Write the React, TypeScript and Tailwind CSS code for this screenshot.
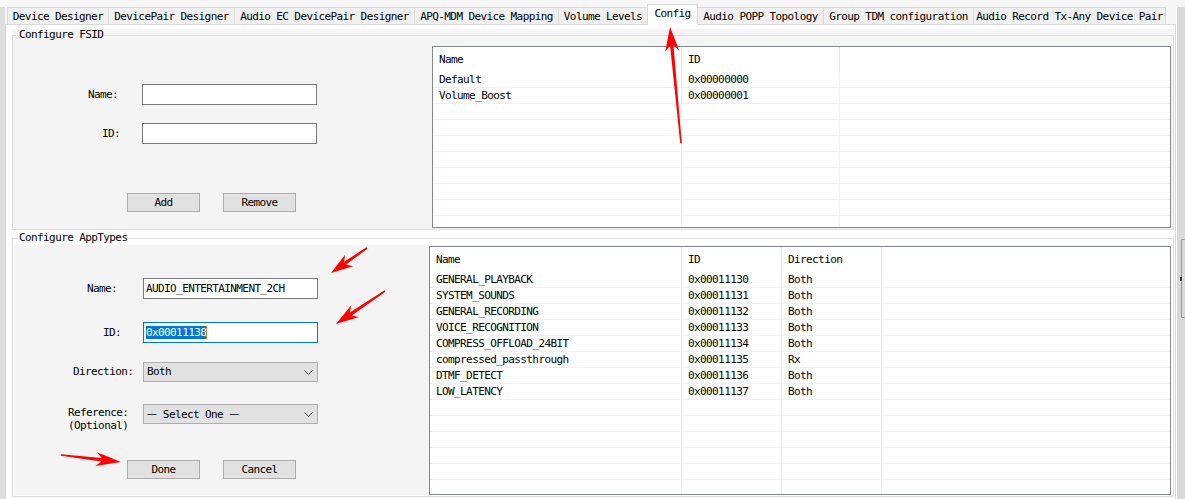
import React from "react";

type Col = { label: string; w: string };

function arrowPts(x1: number, y1: number, x2: number, y2: number, hl: number, hw: number, w0: number, w1: number) {
  const dx = x2 - x1, dy = y2 - y1, L = Math.hypot(dx, dy);
  const ux = dx / L, uy = dy / L, nx = -uy, ny = ux;
  const bx = x2 - ux * hl, by = y2 - uy * hl;
  const kx = x2 - ux * hl * 0.78, ky = y2 - uy * hl * 0.78;
  const p = [
    [x1 + (nx * w0) / 2, y1 + (ny * w0) / 2],
    [kx + (nx * w1) / 2, ky + (ny * w1) / 2],
    [bx + nx * hw, by + ny * hw],
    [x2, y2],
    [bx - nx * hw, by - ny * hw],
    [kx - (nx * w1) / 2, ky - (ny * w1) / 2],
    [x1 - (nx * w0) / 2, y1 - (ny * w0) / 2],
  ];
  return p.map((q) => q.map((v) => v.toFixed(1)).join(",")).join(" ");
}

function ListView({ cols, rows, total, className }: { cols: Col[]; rows: string[][]; total: number; className: string }) {
  const all = Array.from({ length: total }, (_, i) => rows[i] || []);
  return (
    <div className={`border border-[#828790] bg-white overflow-hidden flex flex-col ${className}`}>
      <div className="flex h-[25px] shrink-0">
        {cols.map((c) => (
          <div key={c.label} className={`${c.w} shrink-0 h-full border-r border-[#e5e5e5] flex items-center pl-[6px] pt-px`}>
            {c.label}
          </div>
        ))}
        <div className="flex-1" />
      </div>
      {all.map((r, i) => (
        <div key={i} className="flex h-[16px] shrink-0 border-b border-[#f0f0f0]">
          {cols.map((c, j) => (
            <div key={j} className={`${c.w} shrink-0 h-full border-r border-[#f0f0f0] flex items-center pl-[6px] pt-px whitespace-nowrap overflow-hidden`}>
              {r[j] || ""}
            </div>
          ))}
          <div className="flex-1" />
        </div>
      ))}
    </div>
  );
}

function Btn({ children, className = "" }: { children: React.ReactNode; className?: string }) {
  return (
    <div className={`h-[19px] w-[73px] shrink-0 bg-[#e1e1e1] border border-[#adadad] flex items-center justify-center ${className}`}>
      {children}
    </div>
  );
}

function Chevron() {
  return (
    <svg className="ml-auto mr-[4px]" width="9" height="5" viewBox="0 0 9 5">
      <polyline points="0.5,0.5 4.5,4.5 8.5,0.5" fill="none" stroke="#444" strokeWidth="1" />
    </svg>
  );
}

const tabs: { label: string; cls: string; sel?: boolean }[] = [
  { label: "Device Designer", cls: "w-[101px] border-l" },
  { label: "DevicePair Designer", cls: "w-[126px] border-l" },
  { label: "Audio EC DevicePair Designer", cls: "w-[180px] border-l" },
  { label: "APQ-MDM Device Mapping", cls: "w-[144px] border-l" },
  { label: "Volume Levels", cls: "w-[89px] border-l" },
  { label: "Config", cls: "w-[51px]", sel: true },
  { label: "Audio POPP Topology", cls: "w-[125px]" },
  { label: "Group TDM configuration", cls: "w-[150px] border-l" },
  { label: "Audio Record Tx-Any Device Pair", cls: "w-[193px] border-l border-r" },
];

export default function App() {
  const dash = <span className="font-['Noto_Sans_CJK_SC',sans-serif] tracking-normal">—</span>;
  return (
    <div className="relative w-[1185px] h-[499px] overflow-hidden bg-[#f7f7f7] flex flex-col text-black text-[11px] leading-[12px] tracking-[-0.6px] font-['DejaVu_Sans_Mono',monospace]">
      <div className="h-[7px] shrink-0" />
      <div className="flex h-[492px]">
        <div className="w-[5px] shrink-0 bg-[#dedede]" />
        <div className="w-[1171px] shrink-0 flex flex-col">
          {/* tab strip */}
          <div className="h-[17px] shrink-0 flex items-end pl-[2px]">
            {tabs.map((t) =>
              t.sel ? (
                <div
                  key={t.label}
                  className={`${t.cls} shrink-0 h-[21px] -mb-px relative z-10 bg-white border border-b-0 border-[#d9d9d9] flex items-center justify-center pb-[2px]`}
                >
                  {t.label}
                </div>
              ) : (
                <div
                  key={t.label}
                  className={`${t.cls} shrink-0 h-[17px] bg-[#f0f0f0] border-t border-[#d9d9d9] flex items-center justify-center pt-px whitespace-nowrap overflow-hidden`}
                >
                  {t.label}
                </div>
              )
            )}
          </div>
          {/* tab page */}
          <div className="flex-1 bg-white border-t border-l border-r border-[#d9d9d9] flex flex-col">
            {/* Configure FSID */}
            <div className="ml-[6px] mt-[4px] w-[1162px] h-[201px] shrink-0 bg-[#f4f4f4]">
              <fieldset className="h-[201px] border border-[#dcdcdc]">
                <legend className="ml-[5px] px-[1px] leading-[12px]">Configure FSID</legend>
                <div className="flex h-[188px]">
                  <div className="w-[419px] shrink-0 flex flex-col">
                    <div className="mt-[43px] h-[21px] flex items-center">
                      <div className="w-[129px] shrink-0 pl-[75px]">Name:</div>
                      <div className="w-[175px] h-[21px] bg-white border border-[#7a7a7a]" />
                    </div>
                    <div className="mt-[18px] h-[21px] flex items-center">
                      <div className="w-[129px] shrink-0 pl-[89px]">ID:</div>
                      <div className="w-[175px] h-[21px] bg-white border border-[#7a7a7a]" />
                    </div>
                    <div className="mt-[49px] flex">
                      <Btn className="ml-[114px]">Add</Btn>
                      <Btn className="ml-[23px]">Remove</Btn>
                    </div>
                  </div>
                  <ListView
                    className="w-[739px] shrink-0 mt-[5px] h-[182px]"
                    cols={[
                      { label: "Name", w: "w-[249px]" },
                      { label: "ID", w: "w-[158px]" },
                    ]}
                    rows={[
                      ["Default", "0x00000000"],
                      ["Volume_Boost", "0x00000001"],
                    ]}
                    total={10}
                  />
                </div>
              </fieldset>
            </div>
            {/* Configure AppTypes */}
            <div className="ml-[6px] mt-[2px] w-[1162px] h-[265px] shrink-0">
              <fieldset className="h-[265px] border border-[#dcdcdc]">
                <legend className="ml-[5px] px-[1px] leading-[12px]">Configure AppTypes</legend>
                <div className="ml-[2px] mt-[1px] w-[1156px] h-[250px] bg-[#f4f4f4] flex">
                  <div className="w-[414px] shrink-0 flex flex-col">
                    <div className="mt-[33px] h-[21px] flex items-center">
                      <div className="w-[128px] shrink-0 pl-[72px]">Name:</div>
                      <div className="w-[175px] h-[21px] bg-white border border-[#7a7a7a] flex items-center pl-[2px] whitespace-nowrap">
                        AUDIO_ENTERTAINMENT_2CH
                      </div>
                    </div>
                    <div className="mt-[23px] h-[21px] flex items-center">
                      <div className="w-[128px] shrink-0 pl-[88px]">ID:</div>
                      <div className="w-[175px] h-[21px] bg-white border border-[#0078d7] flex items-center pl-[2px]">
                        <span className="bg-[#0078d7] text-white h-[13px] flex items-center">0x00011138</span>
                        <span className="w-px h-[13px] bg-[#e8801a]" />
                      </div>
                    </div>
                    <div className="mt-[19px] h-[20px] flex items-center">
                      <div className="w-[128px] shrink-0 pl-[58px]">Direction:</div>
                      <div className="w-[175px] h-[20px] bg-[#e1e1e1] border border-[#adadad] flex items-center pl-[3px]">
                        <span>Both</span>
                        <Chevron />
                      </div>
                    </div>
                    <div className="mt-[22px] h-[20px] flex items-start">
                      <div className="w-[128px] shrink-0 pl-[53px] pt-[2px] leading-[13px] whitespace-nowrap">
                        <div>Reference:</div>
                        <div>(Optional)</div>
                      </div>
                      <div className="w-[175px] h-[20px] bg-[#e1e1e1] border border-[#adadad] flex items-center pl-[3px] whitespace-nowrap">
                        <span>
                          {dash} Select One {dash}
                        </span>
                        <Chevron />
                      </div>
                    </div>
                    <div className="mt-[36px] flex">
                      <Btn className="ml-[112px]">Done</Btn>
                      <Btn className="ml-[23px]">Cancel</Btn>
                    </div>
                  </div>
                  <ListView
                    className="w-[742px] shrink-0 mt-[1px] h-[249px]"
                    cols={[
                      { label: "Name", w: "w-[252px]" },
                      { label: "ID", w: "w-[100px]" },
                      { label: "Direction", w: "w-[100px]" },
                    ]}
                    rows={[
                      ["GENERAL_PLAYBACK", "0x00011130", "Both"],
                      ["SYSTEM_SOUNDS", "0x00011131", "Both"],
                      ["GENERAL_RECORDING", "0x00011132", "Both"],
                      ["VOICE_RECOGNITION", "0x00011133", "Both"],
                      ["COMPRESS_OFFLOAD_24BIT", "0x00011134", "Both"],
                      ["compressed_passthrough", "0x00011135", "Rx"],
                      ["DTMF_DETECT", "0x00011136", "Both"],
                      ["LOW_LATENCY", "0x00011137", "Both"],
                    ]}
                    total={14}
                  />
                </div>
              </fieldset>
            </div>
          </div>
        </div>
        <div className="w-[9px] shrink-0 flex">
          <div className="w-px bg-white" />
          <div className="flex-1 bg-[#d9d9d9]" />
        </div>
      </div>

      {/* annotation arrows */}
      <svg className="absolute inset-0 pointer-events-none" width="1185" height="499" viewBox="0 0 1185 499">
        <polygon points={arrowPts(681, 143, 670, 27, 24, 7, 1.6, 3.4)} fill="#ff0000" />
        <polygon points={arrowPts(367, 248, 331, 273, 22, 7, 1.6, 3.4)} fill="#ff0000" />
        <polygon points={arrowPts(385, 291, 336, 324, 23, 7, 1.6, 3.4)} fill="#ff0000" />
        <polygon points={arrowPts(61, 455, 121, 462, 25, 7, 1.6, 3.4)} fill="#ff0000" />
        <path d="M1185 239.5 H1181.5 V317.5 H1185" fill="none" stroke="#9a9a9a" strokeWidth="1" />
        <rect x="1180" y="277" width="2" height="4" fill="#333" />
      </svg>
    </div>
  );
}
